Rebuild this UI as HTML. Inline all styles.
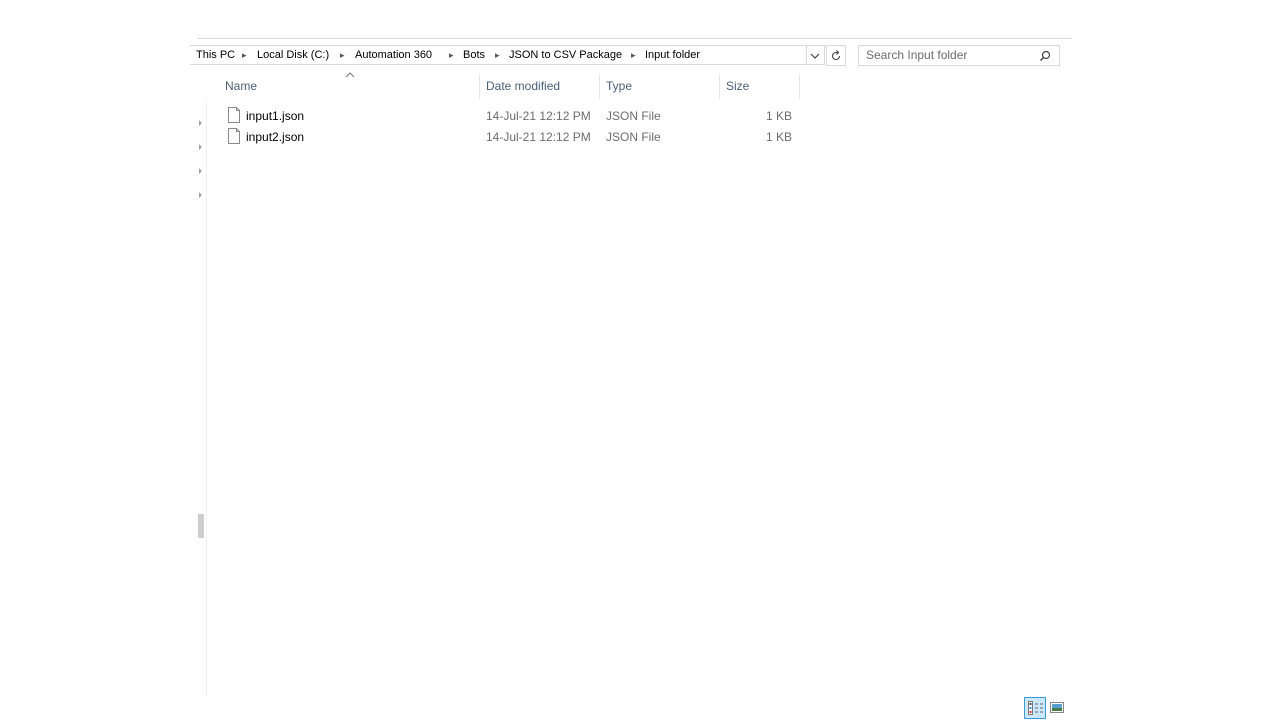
<!DOCTYPE html>
<html><head><meta charset="utf-8"><style>
body{margin:0;width:1280px;height:720px;background:#fff;position:relative;overflow:hidden;font-family:"Liberation Sans",sans-serif;font-size:12px;color:#000}
.a{position:absolute}
.crumb{top:47px;height:16px;line-height:16px;font-size:11px;white-space:nowrap}
.sep{position:absolute;top:47px;line-height:16px;color:#555;font-size:9px}
.hdr{top:79px;color:#4c607a;font-size:12px}
.cs{top:75px;width:1px;height:24px;background:#e5e5e5}
.row{font-size:12px;color:#000}
.g{color:#6d6d6d}
.tri{width:0;height:0;border-left:3px solid #a0a0a0;border-top:3px solid transparent;border-bottom:3px solid transparent;left:199px}
</style></head><body>
<div class="a" style="left:198px;top:38px;width:874px;height:1px;background:#d9d9d9"></div>
<div class="a" style="left:190px;top:45px;width:635px;height:20px;border:1px solid #d9d9d9;border-left:none;box-sizing:border-box"></div>
<div class="a" style="left:806px;top:45px;width:1px;height:20px;background:#d9d9d9"></div>
<div class="a" style="left:826px;top:45px;width:20px;height:21px;border:1px solid #d9d9d9;box-sizing:border-box"></div>
<div class="a crumb" style="left:196px">This PC</div>
<div class="sep" style="left:242px">&#9656;</div>
<div class="a crumb" style="left:257px">Local Disk (C:)</div>
<div class="sep" style="left:340px">&#9656;</div>
<div class="a crumb" style="left:355px">Automation 360</div>
<div class="sep" style="left:449px">&#9656;</div>
<div class="a crumb" style="left:463px">Bots</div>
<div class="sep" style="left:495px">&#9656;</div>
<div class="a crumb" style="left:509px">JSON to CSV Package</div>
<div class="sep" style="left:631px">&#9656;</div>
<div class="a crumb" style="left:645px">Input folder</div>
<svg class="a" style="left:810px;top:52px" width="10" height="8"><path d="M1 2l4 4 4-4" stroke="#444" fill="none" stroke-width="1.2"/></svg>
<svg class="a" style="left:829px;top:49px" width="14" height="14"><path d="M10.5 7a3.5 3.5 0 1 1-3.5-3.5H9M7.5 1.5L9.5 3.5 7.5 5.5" stroke="#444" fill="none" stroke-width="1.1"/></svg>
<div class="a" style="left:858px;top:45px;width:202px;height:21px;border:1px solid #d9d9d9;box-sizing:border-box"></div>
<div class="a" style="left:866px;top:48px;color:#6d6d6d">Search Input folder</div>
<svg class="a" style="left:1039px;top:50px" width="12" height="12"><circle cx="7" cy="5" r="3.5" stroke="#444" fill="none" stroke-width="1.2"/><path d="M4.5 7.5L1.5 10.5" stroke="#444" stroke-width="1.4"/></svg>
<svg class="a" style="left:345px;top:72px" width="10" height="6"><path d="M1 5l4-4 4 4" stroke="#777" fill="none"/></svg>
<div class="a hdr" style="left:225px">Name</div>
<div class="a cs" style="left:479px"></div>
<div class="a hdr" style="left:486px">Date modified</div>
<div class="a cs" style="left:599px"></div>
<div class="a hdr" style="left:606px">Type</div>
<div class="a cs" style="left:719px"></div>
<div class="a hdr" style="left:726px">Size</div>
<div class="a cs" style="left:799px"></div>
<svg class="a" style="left:227px;top:107px" width="14" height="17"><path d="M1.5 .5h8l3 3v12h-11z" fill="#fff" stroke="#8a8a8a"/><path d="M9.5 .5v3h3" fill="none" stroke="#8a8a8a"/></svg>
<svg class="a" style="left:227px;top:128px" width="14" height="17"><path d="M1.5 .5h8l3 3v12h-11z" fill="#fff" stroke="#8a8a8a"/><path d="M9.5 .5v3h3" fill="none" stroke="#8a8a8a"/></svg>
<div class="a row" style="left:246px;top:109px">input1.json</div>
<div class="a row" style="left:246px;top:130px">input2.json</div>
<div class="a g" style="left:486px;top:109px">14-Jul-21 12:12 PM</div>
<div class="a g" style="left:486px;top:130px">14-Jul-21 12:12 PM</div>
<div class="a g" style="left:606px;top:109px">JSON File</div>
<div class="a g" style="left:606px;top:130px">JSON File</div>
<div class="a g" style="left:766px;top:109px">1 KB</div>
<div class="a g" style="left:766px;top:130px">1 KB</div>
<div class="a tri" style="top:120px"></div>
<div class="a tri" style="top:144px"></div>
<div class="a tri" style="top:168px"></div>
<div class="a tri" style="top:192px"></div>
<div class="a" style="left:206px;top:100px;width:1px;height:596px;background:#f0f0f0"></div>
<div class="a" style="left:198px;top:514px;width:6px;height:24px;background:#cdcdcd"></div>
<div class="a" style="left:1024px;top:697px;width:22px;height:22px;background:#cce8ff;border:1px solid #3d9bd8;box-sizing:border-box"></div>
<svg class="a" style="left:1027px;top:700px" width="18" height="16"><rect x="1.5" y="1.5" width="4" height="13" fill="#fff" stroke="#777"/><rect x="2.5" y="3" width="2" height="2" fill="#444"/><rect x="2.5" y="7" width="2" height="2" fill="#3d8fd8"/><rect x="2.5" y="11" width="2" height="2" fill="#d33"/><path d="M8 4h3M13 4h3M8 8h3M13 8h3M8 12h3M13 12h3" stroke="#666"/></svg>
<svg class="a" style="left:1050px;top:702px" width="14" height="12"><rect x=".5" y=".5" width="13" height="10" fill="#fff" stroke="#888"/><rect x="2" y="2" width="10" height="7" fill="#5a9fd4"/><rect x="2" y="6" width="10" height="3" fill="#4a7a4a"/></svg>
</body></html>
